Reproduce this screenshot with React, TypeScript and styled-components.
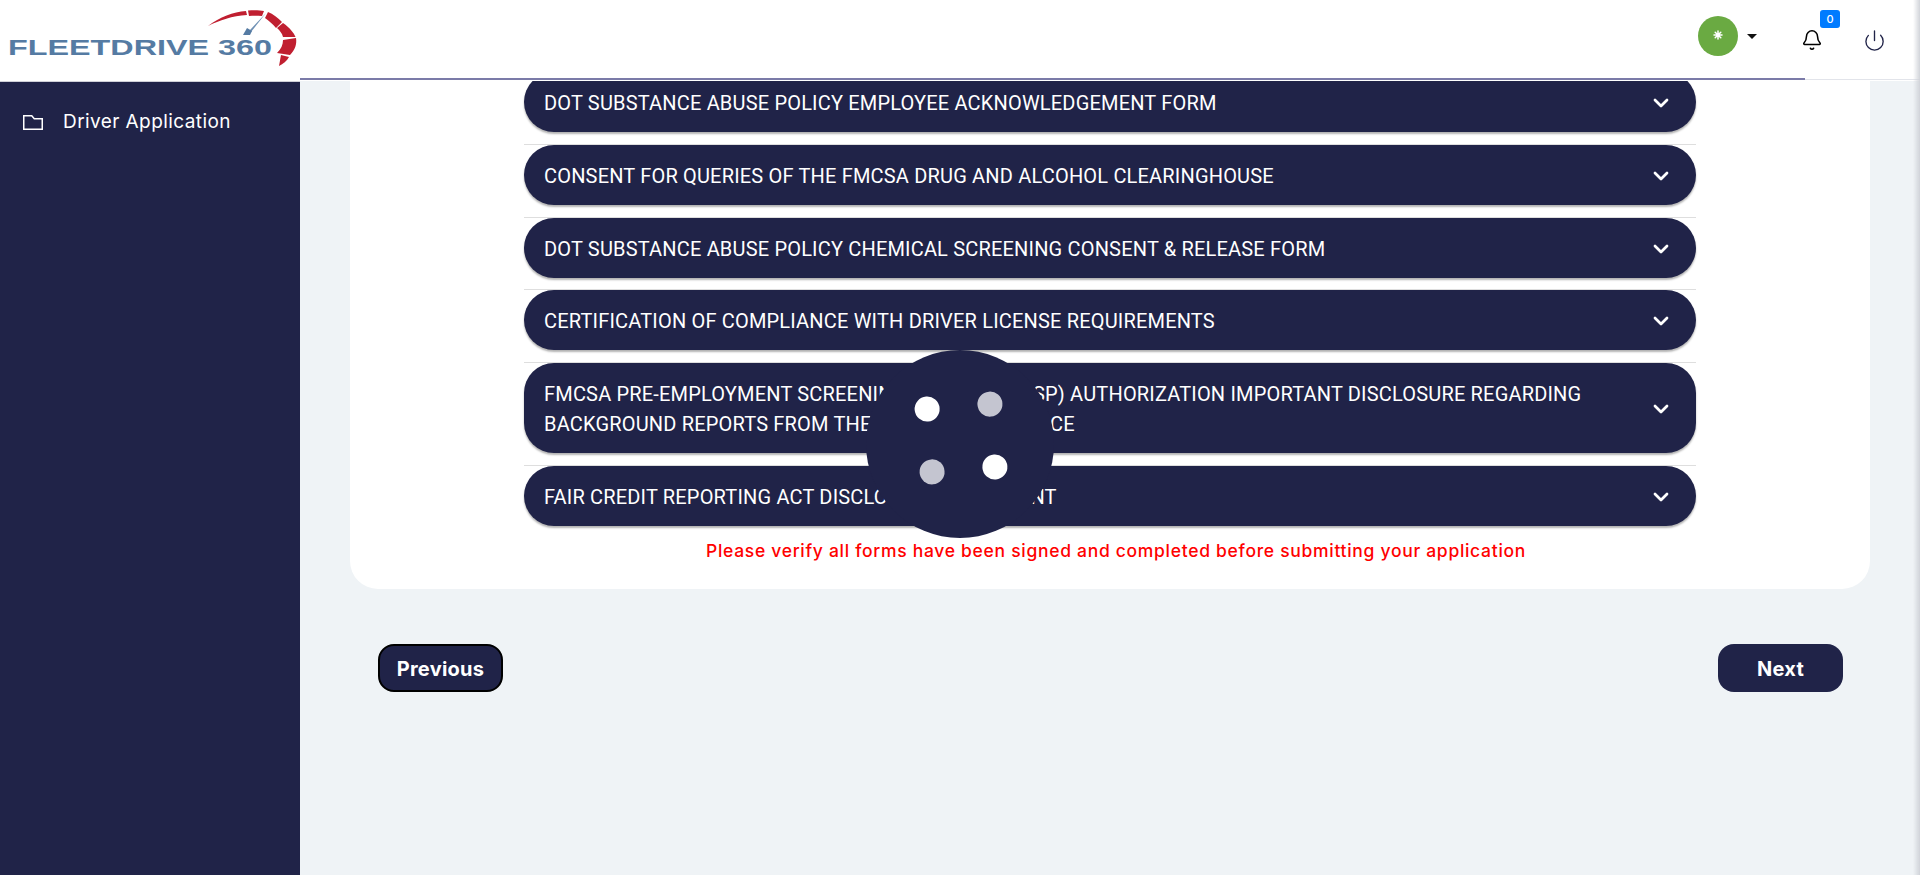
import { Bell, ChevronDown, Power } from 'lucide-react';
import styled, { createGlobalStyle } from 'styled-components';

const NAVY = '#202348';

const GlobalStyle = createGlobalStyle`
    html, body {
        margin: 0;
        height: 100%;
        overflow: hidden;
        background: #eff3f6;
        font-family: 'Inter', 'Liberation Sans', sans-serif;
    }

    * {
        box-sizing: border-box;
    }
`;

const Shell = styled.div`
    display: grid;
    grid-template-columns: 300px 1fr;
    height: 100vh;
    overflow: hidden;
`;

const Header = styled.header`
    position: fixed;
    top: 0;
    left: 0;
    right: 0;
    z-index: 10;
    height: 81px;
    display: flex;
    background: #fff;
`;

const LogoCell = styled.div`
    width: 300px;
    height: 82px;
    flex-shrink: 0;
    border-bottom: 1px solid #cfd0d8;
`;

const HeaderBar = styled.div`
    position: relative;
    flex: 1;
    height: 80px;
    border-bottom: 1px solid #e2e4ea;
`;

const HeaderLine = styled.div`
    position: absolute;
    left: 0;
    bottom: -1px;
    width: 1505px;
    height: 2px;
    background: #7b7ba8;
`;

const Avatar = styled.div`
    position: absolute;
    left: 1398px;
    top: 16px;
    width: 40px;
    height: 40px;
    padding-bottom: 2px;
    border-radius: 50%;
    background: #6aaa42;
    display: flex;
    align-items: center;
    justify-content: center;
`;

const Caret = styled.div`
    position: absolute;
    left: 1447px;
    top: 34px;
    border-top: 5px solid #111;
    border-left: 5.5px solid transparent;
    border-right: 5.5px solid transparent;
`;

const BellSlot = styled.div`
    position: absolute;
    left: 1501px;
    top: 29px;
    display: flex;
    color: #000;
`;

const Badge = styled.span`
    position: absolute;
    left: 1520px;
    top: 10px;
    width: 20px;
    height: 18px;
    border-radius: 3px;
    background: #007bff;
    color: #fff;
    font: 500 11px/18px 'Inter', sans-serif;
    text-align: center;
`;

const PowerSlot = styled.div`
    position: absolute;
    left: 1563px;
    top: 29px;
    display: flex;
    color: ${NAVY};
`;

const Sidebar = styled.aside`
    background: ${NAVY};
    padding: 104px 0 0 23px;
`;

const NavItem = styled.a`
    display: flex;
    align-items: center;
    gap: 20px;
    color: #fff;
    font-size: 19px;
    line-height: 36px;
    letter-spacing: 0.42px;
`;

const Main = styled.main`
    padding: 0 50px;
    min-width: 0;
`;

const Card = styled.section`
    background: #fff;
    border-radius: 0 0 28px 28px;
    padding: 71.33px 174px 0;
    height: 589px;
`;

const AccordionItem = styled.div`
    border-top: 1px solid #dedede;
    padding-bottom: 11.67px;
`;

const AccordionHead = styled.div`
    min-height: 60px;
    display: flex;
    align-items: center;
    justify-content: space-between;
    gap: 40px;
    padding: 16px 23px 14px 20px;
    border-radius: 30px;
    background: ${NAVY};
    box-shadow: 0 2px 2px rgba(0, 0, 0, 0.3);
    color: #fff;
    font: 400 20px/30px 'Roboto', sans-serif;
    letter-spacing: 0.18px;
    text-transform: uppercase;
`;

const Notice = styled.p`
    margin: 0;
    padding: 2px 0 0 12px;
    text-align: center;
    color: #f00;
    font-size: 17.5px;
    font-weight: 500;
    line-height: 24px;
    letter-spacing: 0.7px;
`;

const Pager = styled.div`
    display: flex;
    justify-content: space-between;
    padding: 55px 27px 0 28px;
`;

const PagerButton = styled.button<{ $outlined?: boolean }>`
    width: 125px;
    height: 48px;
    padding-top: 2px;
    border-radius: 16px;
    border: ${(p) => (p.$outlined ? '2px solid #000' : 'none')};
    background: ${NAVY};
    color: #fff;
    font: 700 20px 'Inter', sans-serif;
    letter-spacing: 0.25px;
`;

const Spinner = styled.div`
    position: fixed;
    left: 866px;
    top: 350px;
    z-index: 5;
    width: 188px;
    height: 188px;
    padding: 0 0 13px 2px;
    border-radius: 50%;
    background: ${NAVY};
    display: flex;
    align-items: center;
    justify-content: center;
`;

const SpinnerGrid = styled.div`
    display: grid;
    grid-template-columns: 25px 25px;
    gap: 38px;
    transform: rotate(-4.5deg);
`;

const SpinnerDot = styled.span<{ $dim?: boolean }>`
    width: 25px;
    height: 25px;
    border-radius: 50%;
    background: ${(p) => (p.$dim ? '#c4c5d0' : '#fff')};
`;

const EdgeShade = styled.div`
    position: fixed;
    top: 0;
    right: 0;
    bottom: 0;
    z-index: 20;
    width: 7px;
    background: linear-gradient(to right, rgba(205, 208, 214, 0), rgba(205, 208, 214, 0.9));
`;

const forms = [
    'DOT Substance Abuse Policy Employee Acknowledgement Form',
    'Consent for queries of the FMCSA Drug and Alcohol Clearinghouse',
    'DOT Substance Abuse Policy Chemical Screening Consent & Release Form',
    'Certification of Compliance with Driver License Requirements',
    'FMCSA Pre-Employment Screening Program (PSP) Authorization Important Disclosure Regarding Background Reports from the PSP Online Service',
    'Fair Credit Reporting Act Disclosure Statement',
];

const Logo = () => (
    <svg width="300" height="80" viewBox="0 0 300 80">
        <text
            x="8"
            y="55"
            fontFamily="Liberation Sans"
            fontWeight="700"
            fontSize="22"
            fill="#557ba3"
            textLength="264"
            lengthAdjust="spacingAndGlyphs"
        >
            FLEETDRIVE 360
        </text>
        <g fill="#c01f30">
            <path d="M208 26C220 17 233 12 246 11L247 15C232 16 220 20 208 26Z" />
            <path d="M248 10.500C254 10 260 10.200 264 11L262 16C257 15.500 253 15.500 249 16Z" />
            <path d="M268 12C273 14 278 18 282 22L276 28C273 24 269 21 265 18Z" />
            <path d="M283 23C290 28 294 33 295.500 37L283 37C282 33 280 31 277 28Z" />
            <path d="M296 38C297 44 295 50 290 55L277 53C281 49 283 45 283 40Z" />
            <path d="M289 57C287 61 283 64 279 66L281 55Z" />
        </g>
        <path d="M266 13L250 30L251 32Z" fill="#6d8fb3" />
        <path d="M243 35L247 28L252 31L250 35Z" fill="#557ba3" />
    </svg>
);

const FolderIcon = () => (
    <svg width="20" height="15" viewBox="0 0 20 15" fill="none" stroke="#fff" strokeWidth="1.5">
        <path d="M.75.75h8l2.500 3h8v10.500H.75z" />
    </svg>
);

const StarIcon = () => (
    <svg width="10" height="10" viewBox="0 0 10 10" stroke="#fff" strokeWidth="1.5" strokeLinecap="round">
        <path d="M5 1v8M1 5h8M2.200 2.200l5.600 5.600M7.800 2.200L2.200 7.800" />
    </svg>
);

export default function App() {
    return (
        <>
            <GlobalStyle />
            <Header>
                <LogoCell>
                    <Logo />
                </LogoCell>
                <HeaderBar>
                    <HeaderLine />
                    <Avatar>
                        <StarIcon />
                    </Avatar>
                    <Caret />
                    <BellSlot>
                        <Bell size={22} strokeWidth={1.7} />
                    </BellSlot>
                    <Badge>0</Badge>
                    <PowerSlot>
                        <Power size={23} strokeWidth={1.4} />
                    </PowerSlot>
                </HeaderBar>
            </Header>
            <Shell>
                <Sidebar>
                    <NavItem>
                        <FolderIcon />
                        Driver Application
                    </NavItem>
                </Sidebar>
                <Main>
                    <Card>
                        {forms.map((title) => (
                            <AccordionItem key={title}>
                                <AccordionHead>
                                    <span>{title}</span>
                                    <ChevronDown size={24} strokeWidth={2.75} style={{ flexShrink: 0 }} />
                                </AccordionHead>
                            </AccordionItem>
                        ))}
                        <Notice>Please verify all forms have been signed and completed before submitting your application</Notice>
                    </Card>
                    <Pager>
                        <PagerButton $outlined>Previous</PagerButton>
                        <PagerButton>Next</PagerButton>
                    </Pager>
                </Main>
            </Shell>
            <Spinner>
                <SpinnerGrid>
                    <SpinnerDot />
                    <SpinnerDot $dim />
                    <SpinnerDot $dim />
                    <SpinnerDot />
                </SpinnerGrid>
            </Spinner>
            <EdgeShade />
        </>
    );
}
